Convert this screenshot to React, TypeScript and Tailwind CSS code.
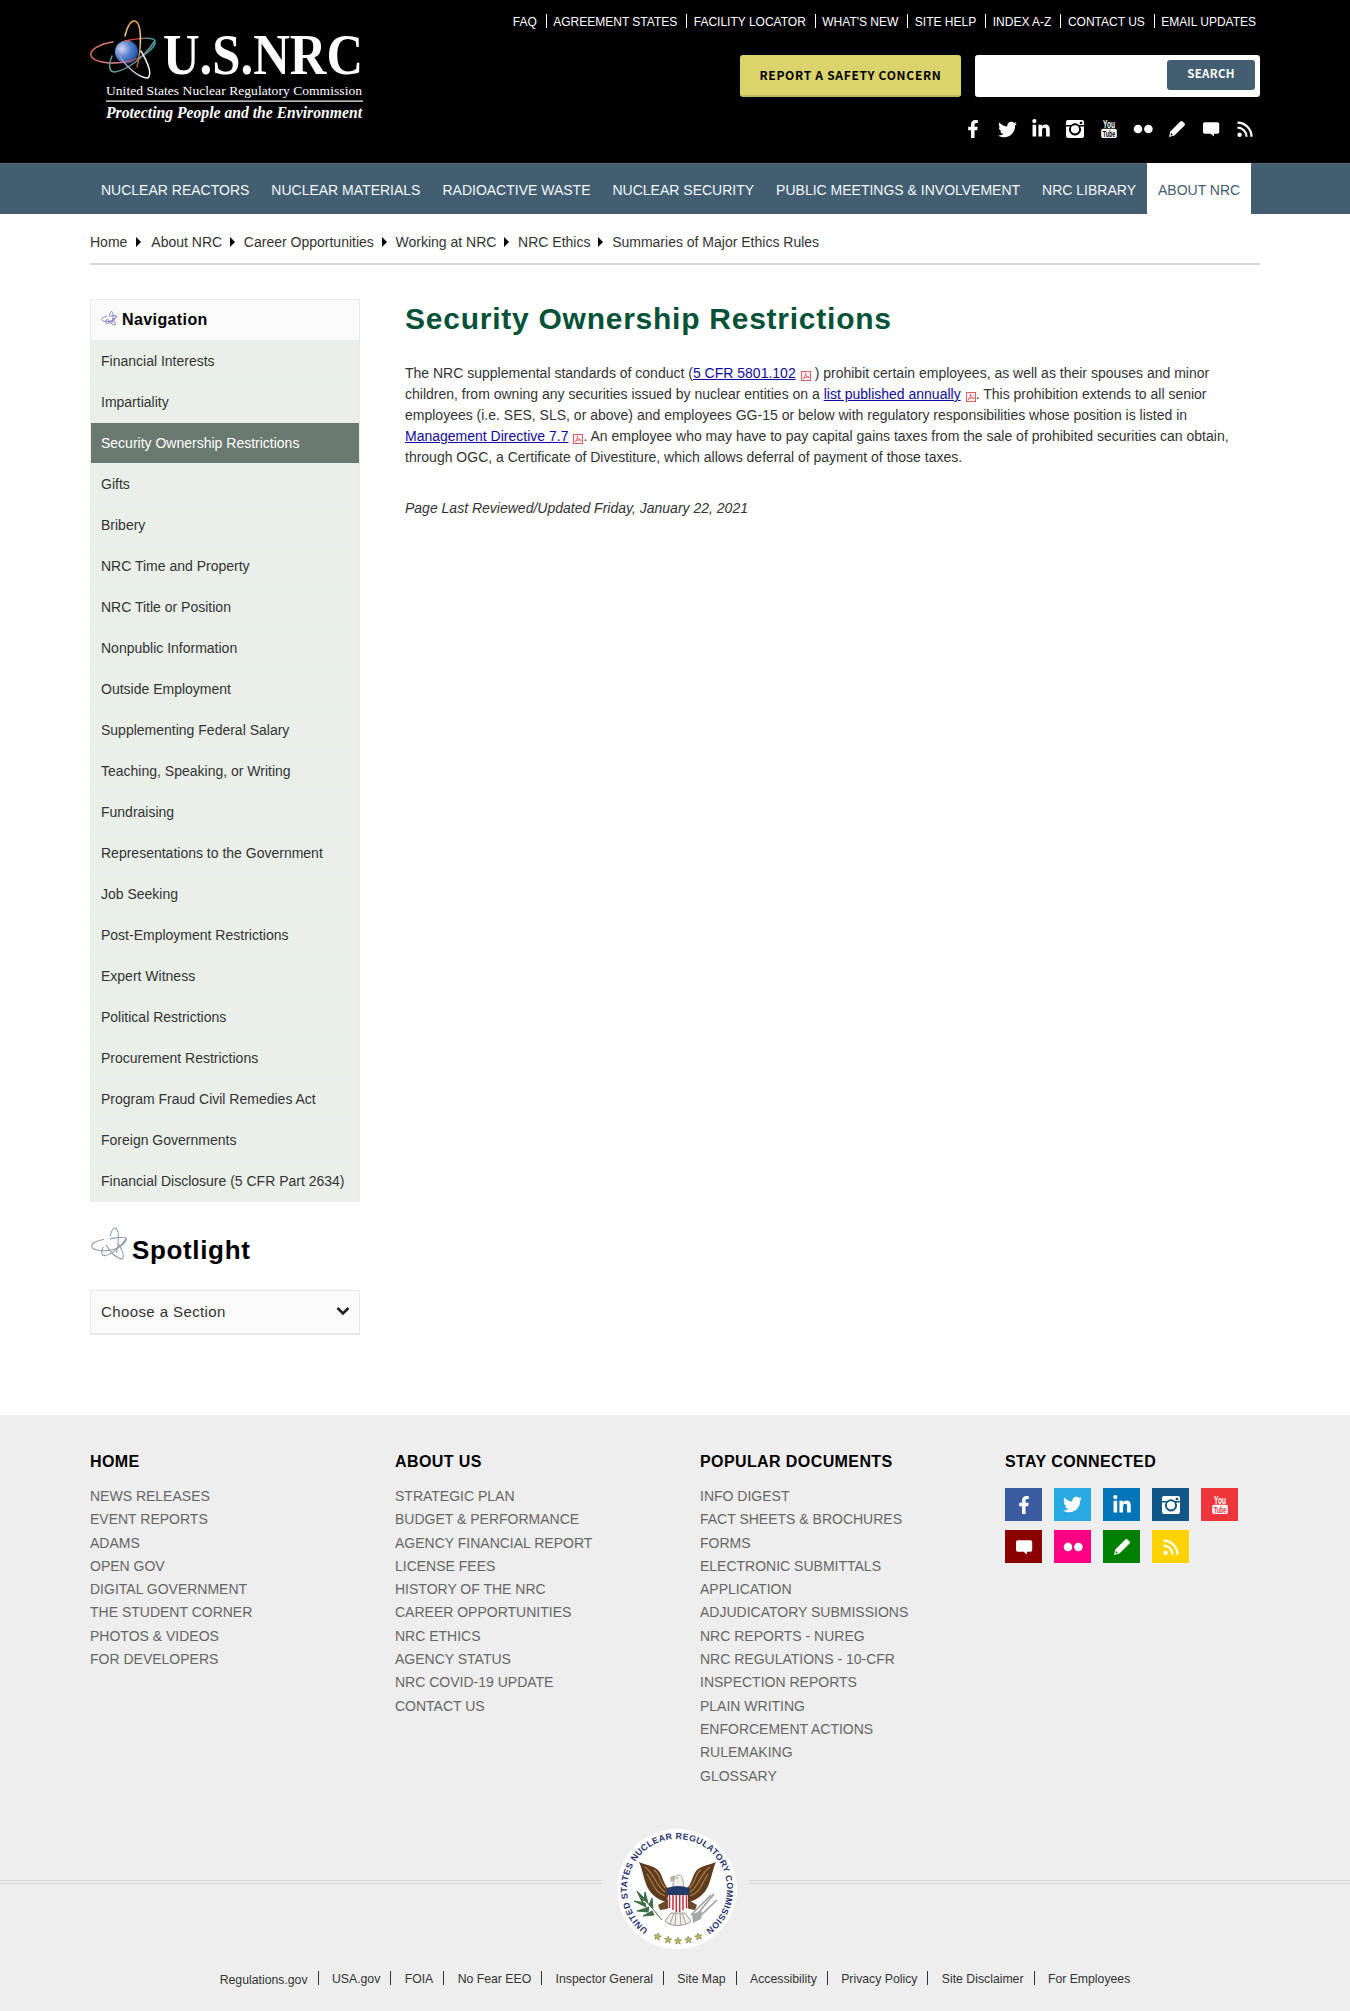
import React from "react";
import { FaFacebookF, FaTwitter, FaLinkedinIn } from "react-icons/fa";

const topLinks = ["FAQ", "AGREEMENT STATES", "FACILITY LOCATOR", "WHAT'S NEW", "SITE HELP", "INDEX A-Z", "CONTACT US", "EMAIL UPDATES"];
const mainNav = ["NUCLEAR REACTORS", "NUCLEAR MATERIALS", "RADIOACTIVE WASTE", "NUCLEAR SECURITY", "PUBLIC MEETINGS & INVOLVEMENT", "NRC LIBRARY", "ABOUT NRC"];
const crumbs = ["Home", "About NRC", "Career Opportunities", "Working at NRC", "NRC Ethics", "Summaries of Major Ethics Rules"];
const sideNav = [
  "Financial Interests", "Impartiality", "Security Ownership Restrictions", "Gifts", "Bribery", "NRC Time and Property",
  "NRC Title or Position", "Nonpublic Information", "Outside Employment", "Supplementing Federal Salary",
  "Teaching, Speaking, or Writing", "Fundraising", "Representations to the Government", "Job Seeking",
  "Post-Employment Restrictions", "Expert Witness", "Political Restrictions", "Procurement Restrictions",
  "Program Fraud Civil Remedies Act", "Foreign Governments", "Financial Disclosure (5 CFR Part 2634)",
];
const footerCols = [
  { title: "HOME", items: ["NEWS RELEASES", "EVENT REPORTS", "ADAMS", "OPEN GOV", "DIGITAL GOVERNMENT", "THE STUDENT CORNER", "PHOTOS & VIDEOS", "FOR DEVELOPERS"] },
  { title: "ABOUT US", items: ["STRATEGIC PLAN", "BUDGET & PERFORMANCE", "AGENCY FINANCIAL REPORT", "LICENSE FEES", "HISTORY OF THE NRC", "CAREER OPPORTUNITIES", "NRC ETHICS", "AGENCY STATUS", "NRC COVID-19 UPDATE", "CONTACT US"] },
  { title: "POPULAR DOCUMENTS", items: ["INFO DIGEST", "FACT SHEETS & BROCHURES", "FORMS", "ELECTRONIC SUBMITTALS", "APPLICATION", "ADJUDICATORY SUBMISSIONS", "NRC REPORTS - NUREG", "NRC REGULATIONS - 10-CFR", "INSPECTION REPORTS", "PLAIN WRITING", "ENFORCEMENT ACTIONS", "RULEMAKING", "GLOSSARY"] },
];
const bottomLinks = ["Regulations.gov", "USA.gov", "FOIA", "No Fear EEO", "Inspector General", "Site Map", "Accessibility", "Privacy Policy", "Site Disclaimer", "For Employees"];

const Instagram = () => (
  <svg viewBox="0 0 18 18" className="size-[18px]">
    <path fill="currentColor" fillRule="evenodd" d="M2 0h14a2 2 0 0 1 2 2v14a2 2 0 0 1-2 2H2a2 2 0 0 1-2-2V2a2 2 0 0 1 2-2zM0 5v1.500h3.900a5.900 5.900 0 1 0 10.200 0H18V5h-4.900a5.900 5.900 0 0 0-8.200 0zM13.800 1.700v2.200h2.400V1.700zM9 5.200a4.100 4.100 0 1 1 0 8.200 4.100 4.100 0 0 1 0-8.200z" />
  </svg>
);
const YouTube = ({ hole }: { hole: string }) => (
  <svg viewBox="0 0 18 20" className="h-5 w-[18px] overflow-visible" fontFamily="Liberation Sans, sans-serif">
    <text x="3" y="8.800" fontSize="10.500" fontWeight="bold" fill="currentColor" textLength="12" lengthAdjust="spacingAndGlyphs">You</text>
    <rect x="1.200" y="9.800" width="15.600" height="9.200" rx="1.800" fill="currentColor" />
    <text x="2.800" y="17.600" fontSize="9" fontWeight="bold" fill={hole} textLength="12.400" lengthAdjust="spacingAndGlyphs">Tube</text>
  </svg>
);
const Flickr = () => (
  <svg viewBox="0 0 20 18" className="h-[18px] w-5"><circle cx="5" cy="9" r="4.300" fill="currentColor" /><circle cx="15.400" cy="9" r="4.300" fill="currentColor" /></svg>
);
const Pencil = () => (
  <svg viewBox="0 0 18 18" className="size-[18px]">
    <path fill="currentColor" fillRule="evenodd" d="M1 17l1.300-5.500L12.500 1.300q.9-.8 1.800 0l2.300 2.300q.8.900 0 1.800L6.400 15.600zM3.100 13l-.5 2.400 2.400-.5z" />
  </svg>
);
const Comment = () => (
  <svg viewBox="0 0 18 18" className="size-[18px]">
    <path fill="currentColor" d="M2.700 2.200h12.800q1.700 0 1.700 1.800v8q0 1.800-1.700 1.800h-3.600v2.600l-3.200-2.600h-6Q1 13.800 1 12V4q0-1.800 1.700-1.800z" />
  </svg>
);
const Rss = () => (
  <svg viewBox="0 0 18 18" className="size-[18px]" fill="none" stroke="currentColor" strokeWidth="2.200">
    <circle cx="3.600" cy="14.800" r="2.200" fill="currentColor" stroke="none" />
    <path d="M1.500 7.700a9 9 0 0 1 9 9M1.500 2.700a14 14 0 0 1 14 14" />
  </svg>
);
const facebook = <FaFacebookF size={18} />;
const twitter = <FaTwitter size={19} />;
const linkedin = <FaLinkedinIn size={20} />;

const headerSocial = [facebook, twitter, linkedin, <Instagram />, <YouTube hole="#000000" />, <Flickr />, <Pencil />, <Comment />, <Rss />];
const footerSocial = [
  { bg: "bg-[#3a5ba0]", icon: facebook }, { bg: "bg-[#29a9e1]", icon: twitter }, { bg: "bg-[#0274b8]", icon: linkedin },
  { bg: "bg-[#125688]", icon: <Instagram /> }, { bg: "bg-[#ee3539]", icon: <YouTube hole="#ee3539" /> }, { bg: "bg-[#8b0000]", icon: <Comment /> },
  { bg: "bg-[#ff0084]", icon: <Flickr /> }, { bg: "bg-[#008000]", icon: <Pencil /> }, { bg: "bg-[#ffd200]", icon: <Rss /> },
];

/* Four crossing orbits shared by the logo and the section headings */
const orbitPaths = [
  "M23 22C9 24 0 30 .8 35C2 43 25 45 40 41C55 37 66 27 65 21C64 17 50 18 35 21",
  "M22 36C18 46 19 52 25 52C38 50 55 36 64 22",
  "M35 16C37 8 40 1 44 1C52 1 52 25 47 47",
  "M28 33C34 45 48 58 58 58C62 54 58 43 51 31",
];
const Orbits = ({ colors, w }: { colors: string[]; w: number }) => (
  <g fill="none" strokeWidth={w} strokeLinecap="round">
    {orbitPaths.map((d, i) => <path key={d} d={d} stroke={colors[i % colors.length]} />)}
  </g>
);

const Logo = () => (
  <svg width="280" height="110" viewBox="0 0 280 110" className="block overflow-visible" fontFamily="Liberation Serif, serif" fill="#fff">
    <defs>
      <radialGradient id="core" cx=".3" cy=".35" r=".8"><stop offset="0" stopColor="#d5d9f0" /><stop offset=".45" stopColor="#5d85cf" /><stop offset="1" stopColor="#0643a0" /></radialGradient>
      <linearGradient id="o1"><stop offset="0" stopColor="#e86f50" /><stop offset=".35" stopColor="#d58c95" /><stop offset=".7" stopColor="#c3383d" /><stop offset="1" stopColor="#32b0b8" /></linearGradient>
      <linearGradient id="o2" x2="0" y2="1"><stop offset="0" stopColor="#f2a24a" /><stop offset=".4" stopColor="#f5d79a" /><stop offset="1" stopColor="#a1572a" /></linearGradient>
      <linearGradient id="o3"><stop offset="0" stopColor="#8a93b5" /><stop offset="1" stopColor="#ffffff" /></linearGradient>
    </defs>
    <circle cx="36.500" cy="32" r="11.500" fill="url(#core)" />
    <Orbits colors={["url(#o1)", "#62999a", "url(#o2)", "url(#o3)"]} w={1.5} />
    <text x="73" y="53.500" fontSize="56" fontWeight="bold" textLength="200" lengthAdjust="spacingAndGlyphs">U.S.NRC</text>
    <text x="16" y="74.500" fontSize="13.500" textLength="256" lengthAdjust="spacing">United States Nuclear Regulatory Commission</text>
    <rect x="16" y="80.500" width="257" height="1.200" />
    <text x="16" y="98" fontSize="16.500" fontStyle="italic" fontWeight="bold" textLength="256" lengthAdjust="spacingAndGlyphs">Protecting People and the Environment</text>
  </svg>
);

const star = "M0-4L1.100-1.300L4-1.200L1.700 .6L2.500 3.500L0 1.800L-2.500 3.500L-1.700 .6L-4-1.200L-1.100-1.300Z";

const Seal = () => (
  <svg width="124" height="124" viewBox="-63 -62 124 124" className="block overflow-visible">
    <defs><path id="ring" d="M-29 40.700A50 50 0 1 1 29 40.700" /></defs>
    <circle r="60" fill="#fff" />
    <text fontFamily="Liberation Sans, sans-serif" fontSize="8.800" fontWeight="bold" fill="#29326f">
      <textPath href="#ring" textLength="252" lengthAdjust="spacing">UNITED STATES NUCLEAR REGULATORY COMMISSION</textPath>
    </text>
    <path d="M-8 10L-19 16L-17 21L-10 20L-5 15M10 10L20 16L18 21L12 20L6 15" fill="#6b4a2a" />
    {[-1, 1].map((s) => (
      <g key={s} transform={`translate(${s < 0 ? 1 : 0} 0) scale(${s} 1)`}>
        <path d="M9 0C15-4 15-14 20-19C26-24 33-24 39-27C36-21 35-13 32-5C29 3 22 11 11 13Z" fill="#5e3a1e" />
        <path d="M12-1C20-7 17-15 24-19M13 3C22-2 22-14 33-22M13 7C23 4 25-6 31-15" fill="none" stroke="#b18345" strokeWidth="1.100" />
      </g>
    ))}
    <path d="M-6 24L-12 32C-8 38 9 38 14 32L8 24Z" fill="#f1efe9" stroke="#85817c" strokeWidth=".8" />
    <path d="M-3 24L-7 35M-1 24L-2 36M3 24L4 36M5 24L9 35" stroke="#8d8984" strokeWidth=".8" />
    <path d="M-9 3H11V18Q6 22 1 23Q-5 22-9 18Z" fill="#fff" />
    <path d="M-7.500 5V19M-4 5V21M-.7 5V23M2.700 5V23M6 5V21M9.500 5V19" stroke="#c32a38" strokeWidth="1.500" />
    <path d="M-4-2C-4-10-2-14 2-14C6-14 6-7 7-1Z" fill="#f3f0ea" stroke="#8a8d95" strokeWidth=".8" />
    <path d="M-2-13C-7-14-8-10-6-7L-2-9Z" fill="#b9b7a2" />
    <circle cx="0" cy="-11" r=".6" fill="#222" />
    <path d="M-10-1Q1-5 12-1V6H-10Z" fill="#233b68" />
    <path d="M-15 31L-37 5" stroke="#4e6e43" strokeWidth="1" />
    <path d="M-40 2L-32 10L-35 13ZM-43 12L-32 14L-31 18ZM-40 22L-28 18L-29 23ZM-32 3L-29 14L-33 11ZM-25 9L-24 19L-28 16ZM-34 27L-25 22L-23 26Z" fill="#3f6d45" stroke="#3f6d45" />
    <path d="M17 29L37 5M14 26L34 6M20 30L40 11" stroke="#9a9c9e" strokeWidth="1.500" />
    <path d="M15 25L25 22L24 30L16 34Z" fill="#a5a6a8" />
    {[[-19.5, 47.5, 12], [-9, 50.8, 6], [1, 52, 0], [11.5, 50.8, -6], [21.5, 47.5, -12]].map(([x, y, r]) => (
      <path key={x} d={star} transform={`translate(${x} ${y}) rotate(${r}) scale(.9)`} fill="#c3bd62" stroke="#77793b" strokeWidth=".7" />
    ))}
  </svg>
);

const Pdf = ({ className = "" }: { className?: string }) => (
  <svg viewBox="0 0 11 11" className={`ml-[5px] inline-block size-[10px] align-[-3px] ${className}`} fill="none" stroke="#df5055">
    <rect x=".5" y=".5" width="10" height="10" fill="#fff4f4" />
    <path d="M2 9C4 7 5.500 4 4.900 2M5 3C5 5 7 7 9.400 6.700M2.700 7.800C5 6.300 7 6.400 9 6.900" strokeWidth=".9" />
  </svg>
);

const Link = ({ children }: { children: React.ReactNode }) => <a className="text-[#0f0a9c] underline">{children}</a>;

export default function App() {
  return (
    <div className="min-h-[2011px] w-[1350px] bg-white font-['Liberation_Sans',Arial,sans-serif] text-sm text-[#333]">
      <header className="h-[163px] bg-black text-white">
        <div className="mx-auto flex w-[1170px] justify-between">
          <div className="pt-5"><Logo /></div>
          <div className="flex flex-col items-end">
            <ul className="mr-1 flex h-[55px] pt-[14px] text-xs leading-[17px]">
              {topLinks.map((t, i) => (
                <li key={t} className={i ? "ml-[9px] flex whitespace-nowrap" : "flex whitespace-nowrap"}>
                  {i > 0 && <span className="mr-[6.5px] h-[14px] w-px bg-white" />}
                  {t}
                </li>
              ))}
            </ul>
            <div className="flex gap-[14px] font-['Noto_Sans_CJK_SC',sans-serif] text-xs font-bold">
              <button className="h-[42px] w-[221px] rounded-[3px] border-b-2 border-[#c0b95d] bg-[#dbd36c] tracking-[0.7px] whitespace-nowrap text-black">REPORT A SAFETY CONCERN</button>
              <div className="flex h-[42px] w-[285px] justify-end rounded-[3px] bg-white pt-[5px] pr-[5px]">
                <button className="h-[30px] w-[88px] rounded-[3px] bg-[#425e70] pb-0.5 text-[11.5px] tracking-[0.3px] text-white">SEARCH</button>
              </div>
            </div>
            <div className="-mr-0.5 mt-[15px] flex">
              {headerSocial.map((icon, i) => <span key={i} className="flex h-[34px] w-[34px] items-center justify-center">{icon}</span>)}
            </div>
          </div>
        </div>
      </header>

      <nav className="h-[51px] border-t border-[#4d6a7b] bg-[#425e70]">
        <ul className="mx-auto -mt-px flex w-[1170px] leading-[54px] text-[#f2f7fb]">
          {mainNav.map((t) => (
            <li key={t} className={t === "ABOUT NRC" ? "h-[51px] bg-white px-[11px] text-[#425e70]" : "h-[51px] px-[11px] whitespace-nowrap"}>{t}</li>
          ))}
        </ul>
      </nav>

      <div className="mx-auto w-[1170px]">
        <ol className="flex h-[51px] items-start border-b-2 border-[#d5d5d5] pt-[18px] leading-5">
          {crumbs.map((t, i) => (
            <li key={t} className="flex items-center">
              {i > 0 && <span className={i === 1 ? "mr-[10px] ml-[9px] border-y-[5px] border-l-[5px] border-y-transparent border-l-black" : "mr-[8.7px] ml-[8px] border-y-[5px] border-l-[5px] border-y-transparent border-l-black"} />}
              {t}
            </li>
          ))}
        </ol>

        <div className="flex h-[1150px] pt-[34px]">
          <aside className="w-[270px] shrink-0">
            <div className="border border-[#e9ebe9]">
              <h2 className="flex h-10 items-center bg-[#fafafa] pl-[10px] text-base font-bold tracking-[0.4px] text-black">
                <svg viewBox="-1 -1 68 63" className="mr-[5px] mb-[3px] h-[15px] w-4"><Orbits colors={["#8177bd"]} w={4} /></svg>
                Navigation
              </h2>
              <ul className="bg-[#eaefea]">
                {sideNav.map((t) => (
                  <li key={t} className={t.startsWith("Security") ? "h-[41px] border-t border-[#eaefea] bg-[#6a796f] pl-[10px] leading-10 text-white" : "h-[41px] border-t border-[#e7edf0] pl-[10px] leading-[41px] whitespace-nowrap"}>{t}</li>
                ))}
              </ul>
            </div>
            <h2 className="mt-[25px] flex h-[34px] text-[26px] leading-[46px] font-bold tracking-[0.65px] text-black">
              <svg viewBox="-1 -1 68 63" className="mr-[4px] h-[34px] w-[38px]"><Orbits colors={["#8d9bb0", "#9296a4"]} w={2} /></svg>
              Spotlight
            </h2>
            <div className="mt-[29px] flex h-[45px] items-center justify-between border border-b-2 border-[#e8e8e8] bg-[#fafafa] pr-[9px] pl-[10px] text-[15px] tracking-[0.4px]">
              Choose a Section
              <svg viewBox="0 0 14 10" className="mb-0.5 h-[10px] w-[14px]" fill="none" stroke="#222" strokeWidth="2.600"><path d="M1.500 2L7 7.500L12.500 2" /></svg>
            </div>
          </aside>
          <main className="ml-[45px] w-[855px]">
            <h1 className="text-[30px] leading-10 font-bold tracking-[0.75px] text-[#055239]">Security Ownership Restrictions</h1>
            <p className="mt-[24px] leading-[21px]">
              The NRC supplemental standards of conduct (<Link>5 CFR 5801.102</Link><Pdf className="mr-[4px]" />) prohibit certain employees, as well as their spouses and minor<br />
              children, from owning any securities issued by nuclear entities on a <Link>list published annually</Link><Pdf />. This prohibition extends to all senior<br />
              employees (i.e. SES, SLS, or above) and employees GG-15 or below with regulatory responsibilities whose position is listed in<br />
              <Link>Management Directive 7.7</Link><Pdf />. An employee who may have to pay capital gains taxes from the sale of prohibited securities can obtain,<br />
              through OGC, a Certificate of Divestiture, which allows deferral of payment of those taxes.
            </p>
            <p className="mt-[30px] leading-[21px] italic">Page Last Reviewed/Updated Friday, January 22, 2021</p>
          </main>
        </div>
      </div>

      <footer className="h-[596px] bg-[#eeeeee]">
        <div className="mx-auto grid h-[412px] w-[1170px] grid-cols-[305px_305px_305px_1fr] pt-[35px]">
          {footerCols.map((c) => (
            <section key={c.title}>
              <h3 className="text-base leading-[23px] font-bold tracking-[0.4px] text-black">{c.title}</h3>
              <ul className="mt-[12px] leading-[23.3px] text-[#666]">{c.items.map((t) => <li key={t} className="whitespace-nowrap">{t}</li>)}</ul>
            </section>
          ))}
          <section>
            <h3 className="text-base leading-[23px] font-bold tracking-[0.4px] text-black">STAY CONNECTED</h3>
            <div className="mt-[15px] flex w-[250px] flex-wrap gap-x-3 gap-y-[9px] text-white">
              {footerSocial.map((s) => <a key={s.bg} className={`flex h-[33px] w-[37px] items-center justify-center ${s.bg}`}>{s.icon}</a>)}
            </div>
          </section>
        </div>
        <div className="flex h-[124px] justify-between">
          <div className="mt-[53px] h-1 w-[602px] border-y border-[#d6d6d6]" />
          <Seal />
          <div className="mt-[53px] h-1 w-[601px] border-y border-[#d6d6d6]" />
        </div>
        <ul className="flex justify-center pt-[20px] text-[12.25px] leading-4">
          {bottomLinks.map((t, i) => (
            <li key={t} className="flex whitespace-nowrap">
              {i > 0 && <span className="mr-[13.4px] ml-[10px] h-[14px] w-px bg-[#333]" />}
              <span className={i ? "" : "pt-px"}>{t}</span>
            </li>
          ))}
        </ul>
      </footer>
    </div>
  );
}
